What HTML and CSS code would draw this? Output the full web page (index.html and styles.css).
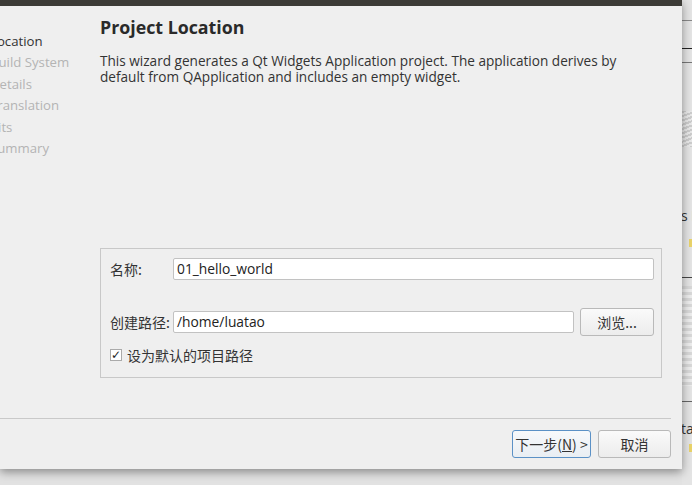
FILE: index.html
```html
<!DOCTYPE html>
<html>
<head>
<meta charset="utf-8">
<link rel="stylesheet" href="styles.css">
</head>
<body>
<div class="screen">
  <div class="dialog">
    <div class="titlebar"></div>
    <div class="dialog-body">
      <div class="content">
        <ul class="steps">
          <li class="active">Location</li>
          <li>Build System</li>
          <li>Details</li>
          <li>Translation</li>
          <li>Kits</li>
          <li>Summary</li>
        </ul>
        <div class="page">
          <h1 class="title">Project Location</h1>
          <p class="desc">This wizard generates a Qt Widgets Application project. The application derives by default from QApplication and includes an empty widget.</p>
          <div class="group">
            <div class="row row-name">
              <label class="lbl">名称:</label>
              <div class="input">01_hello_world</div>
            </div>
            <div class="row row-path">
              <label class="lbl">创建路径:</label>
              <div class="input">/home/luatao</div>
              <button class="btn browse">浏览...</button>
            </div>
            <div class="row row-check">
              <span class="checkbox">✓</span>
              <span class="check-label">设为默认的项目路径</span>
            </div>
          </div>
        </div>
      </div>
      <div class="separator"></div>
      <div class="buttons">
        <button class="btn primary">下一步(<u>N</u>) &gt;</button>
        <button class="btn cancel">取消</button>
      </div>
    </div>
  </div>
  <div class="backdrop">
    <div class="bd-line bd-l1"></div>
    <div class="bd-line bd-l2"></div>
    <div class="bd-line bd-l3"></div>
    <div class="bd-sketch"></div>
    <div class="bd-text">s I</div>
    <div class="bd-dot"></div>
    <div class="bd-line bd-l4"></div>
    <div class="bd-shot"></div>
    <div class="bd-line bd-l5"></div>
    <div class="bd-text bd-t2">ta</div>
    <div class="bd-dot bd-d2"></div>
  </div>
</div>
</body>
</html>
```

FILE: styles.css
```css
* { box-sizing: border-box; }
html, body {
  margin: 0;
  padding: 0;
}
body {
  width: 692px;
  height: 485px;
  overflow: hidden;
  background: #e2e2e2;
  font-family: "Open Sans", "Noto Sans CJK SC", sans-serif;
  font-size: 13.6px;
  color: #333;
}
.screen {
  display: flex;
  height: 485px;
}
.dialog {
  width: 682px;
  height: 469px;
  display: flex;
  flex-direction: column;
  background: #efefef;
  box-shadow: 0 3px 9px rgba(0, 0, 0, 0.4);
  position: relative;
  z-index: 1;
}
.titlebar {
  height: 6px;
  background: #3c3b37;
}
.dialog-body {
  flex: 1;
  display: flex;
  flex-direction: column;
  padding: 0 11px 11px 0;
}
.content {
  height: 372px;
  display: flex;
}
.steps {
  list-style: none;
  margin: 0;
  padding: 25px 0 0 0;
  width: 100px;
  overflow: hidden;
}
.steps li {
  margin-left: -10px;
  line-height: 21.4px;
  font-size: 13.2px;
  color: #b4b4b4;
  white-space: nowrap;
}
.steps li.active {
  color: #333;
}
.page {
  flex: 1;
  display: flex;
  flex-direction: column;
  padding-right: 9px;
}
.title {
  margin: 10px 0 0 0;
  font-size: 17.8px;
  line-height: 22px;
  font-weight: 700;
  color: #2a2a2a;
}
.desc {
  margin: 15px 0 0 0;
  line-height: 16px;
  color: #333;
  padding-right: 30px;
}
.group {
  margin-top: auto;
  height: 130px;
  border: 1px solid #c8c8c8;
  padding: 9px 7px 0 9px;
  display: flex;
  flex-direction: column;
}
.row {
  display: flex;
  align-items: center;
}
.lbl {
  width: 63px;
  flex: none;
  font-family: "Noto Sans CJK SC", sans-serif;
  font-size: 14px;
  color: #333;
}
.input {
  flex: 1;
  height: 22px;
  background: #fff;
  border: 1px solid #c2c2c2;
  border-radius: 2px;
  padding: 0 3px;
  line-height: 20px;
  font-size: 13.8px;
  color: #222;
}
.row-path {
  margin-top: 28px;
  height: 28px;
}
.btn {
  font-family: "Noto Sans CJK SC", sans-serif;
  font-size: 14px;
  color: #333;
  height: 28px;
  border: 1px solid #b9b9b9;
  border-radius: 3px;
  background: linear-gradient(#fafafa, #ececec);
  padding: 0;
  margin: 0;
}
.browse {
  width: 74px;
  margin-left: 6px;
}
.row-check {
  margin-top: 11px;
  height: 16px;
}
.checkbox {
  width: 12px;
  height: 12px;
  background: #fff;
  border: 1px solid #aaa;
  font-size: 12px;
  font-weight: 700;
  line-height: 10px;
  text-align: center;
  color: #222;
  font-family: "DejaVu Sans", sans-serif;
}
.check-label {
  margin-left: 5px;
  font-family: "Noto Sans CJK SC", sans-serif;
  font-size: 14px;
  color: #333;
}
.separator {
  margin-top: 40px;
  height: 1px;
  background: #c9c9c9;
}
.buttons {
  margin-top: 11px;
  display: flex;
  justify-content: flex-end;
  gap: 7px;
}
.primary {
  width: 79px;
  border-color: #5b91c6;
  background: linear-gradient(#f7f9fb, #e9eef3);
}
.cancel {
  width: 73px;
}
.backdrop {
  width: 10px;
  height: 485px;
  background: #e4e4e4;
  display: flex;
  flex-direction: column;
  overflow: hidden;
}
.bd-line {
  height: 1px;
  background: #555;
}
.bd-l1 { margin-top: 20px; background: #888; }
.bd-l2 { margin-top: 27px; background: #222; }
.bd-l3 { margin-top: 13px; background: #777; }
.bd-sketch {
  margin-top: 48px;
  height: 36px;
  background: repeating-linear-gradient(160deg, #ccc 0 2px, #e8e8e8 2px 4px);
}
.bd-text {
  margin-top: 60px;
  font-size: 14px;
  line-height: 18px;
  color: #333;
  white-space: nowrap;
  margin-left: -1px;
}
.bd-dot {
  margin-top: 14px;
  height: 8px;
  width: 4px;
  margin-left: 7px;
  background: #e9d36a;
}
.bd-l4 { margin-top: 30px; background: #444; }
.bd-shot {
  margin-top: 8px;
  height: 100px;
  background: repeating-linear-gradient(180deg, #d8d8d8 0 3px, #ececec 3px 6px);
}
.bd-l5 { margin-top: 15px; background: #666; }
.bd-t2 { margin-top: 18px; }
.bd-d2 { margin-top: 6px; }
```
